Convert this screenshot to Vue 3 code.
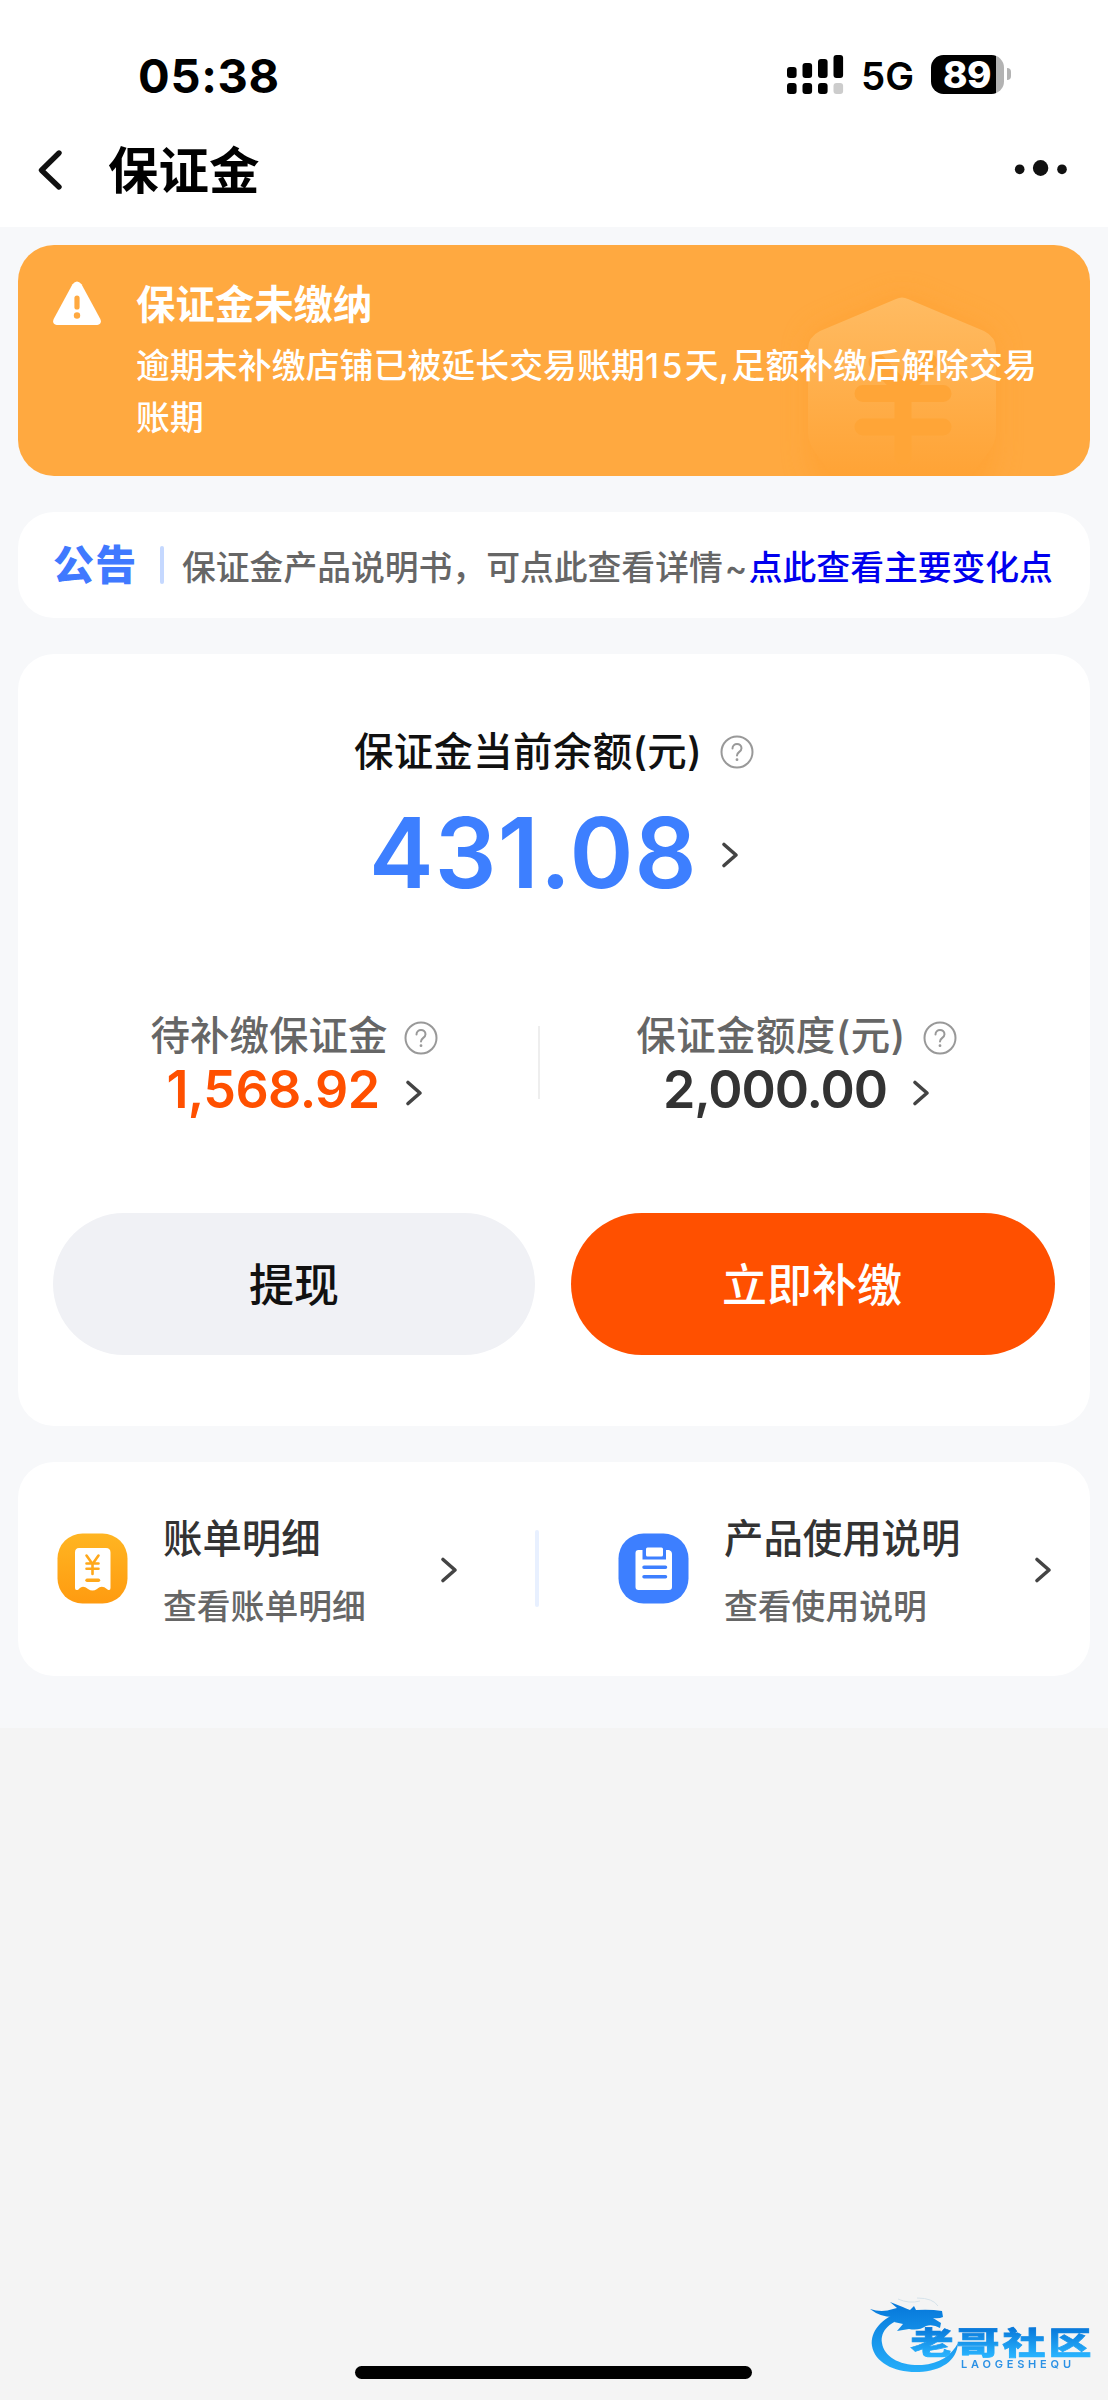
<script setup>
const signalBars = [
  { x: 0, y: 12, h: 11 },
  { x: 15.5, y: 8, h: 15 },
  { x: 31, y: 4, h: 19 },
  { x: 46.5, y: 0, h: 23 },
]
const stats = [
  { key: 'due', label: '待补缴保证金', value: '1,568.92' },
  { key: 'quota', label: '保证金额度(元)', value: '2,000.00' },
]
</script>

<template>
  <div class="page">
    <header class="top">
      <div class="status">
        <span class="time">05:38</span>
        <div class="status-right">
          <svg class="signal" width="57" height="40" viewBox="0 0 57 40">
            <rect v-for="b in signalBars" :key="b.x" :x="b.x" :y="b.y" width="9.6" :height="b.h" rx="3" />
            <rect v-for="b in signalBars" :key="'s' + b.x" :x="b.x" y="28" width="9.6" height="11" rx="3" :fill="b.y === 0 ? '#ccc' : '#000'" />
          </svg>
          <span class="net">5G</span>
          <div class="battery"><span class="level">89</span></div>
          <i class="nub"></i>
        </div>
      </div>
      <nav class="nav">
        <svg class="back" width="28" height="44" viewBox="0 0 28 44" fill="none" stroke="#111" stroke-width="5.4" stroke-linecap="round" stroke-linejoin="round">
          <path d="M23 5 5.500 22.200 23 39" />
        </svg>
        <h1 class="nav-title">保证金</h1>
        <svg class="more" width="54" height="18" viewBox="0 0 54 18" fill="#111">
          <ellipse cx="5.700" cy="10.300" rx="4.800" ry="4.900" /><ellipse cx="26.600" cy="9" rx="7.700" ry="7.900" /><ellipse cx="48" cy="10.300" rx="4.800" ry="4.900" />
        </svg>
      </nav>
    </header>

    <main class="content">
      <section class="banner">
        <svg class="shield" width="280" height="231" viewBox="0 0 280 231">
          <defs>
            <linearGradient id="shieldFill" x1="0" y1="52" x2="0" y2="231" gradientUnits="userSpaceOnUse">
              <stop offset="0" stop-color="#ffbb62" /><stop offset="1" stop-color="#ffa335" />
            </linearGradient>
            <filter id="halo" x="-30%" y="-30%" width="160%" height="160%"><feGaussianBlur stdDeviation="13" /></filter>
          </defs>
          <path d="M130 52q7-4 14 0l76 32q11 6 11 20v96q0 60-94 110-94-50-94-110v-96q0-14 11-20z" fill="#ff9d2a" opacity=".5" filter="url(#halo)" />
          <path d="M131 53q6-3 12 0l76 32q12 6 12 18v82c0 14-5 18-26 46H68c-20-28-25-32-25-46v-82q0-12 12-18z" fill="url(#shieldFill)" />
          <g fill="none" stroke="#ffa537" stroke-width="17" stroke-linecap="round">
            <path d="M98 147.500h80M98 181h80M138 150v60M112 116l26 28 26-28" />
          </g>
        </svg>
        <svg class="warn" width="50" height="46" viewBox="0 0 50 46">
          <path d="M20.500 3.200q4.500-5.400 9 0L48.300 38q2 5-3 6H4.700q-5-1-3-6z" fill="#fff" />
          <path d="M25 17v9" stroke="#ffa940" stroke-width="5.200" stroke-linecap="round" /><circle cx="25" cy="34.500" r="3.200" fill="#ffa940" />
        </svg>
        <div class="banner-text">
          <h2>保证金未缴纳</h2>
          <p>逾期未补缴店铺已被延长交易账期<span class="wide">15</span>天<span class="wide">,</span>足额补缴后解除交易账期</p>
        </div>
      </section>

      <section class="notice">
        <strong class="notice-tag">公告</strong>
        <i class="notice-line"></i>
        <p>保证金产品说明书，可点此查看详情<span class="tilde">~</span><a>点此查看主要变化点</a></p>
      </section>

      <section class="account">
        <div class="balance-label">
          <span>保证金当前余额(元)</span>
          <svg class="help" width="34" height="34" viewBox="0 0 34 34"><circle cx="17" cy="17" r="15.500" /><path d="M12.500 13.500c0-6 9-6 9-.2 0 3.700-4.500 3.500-4.500 7.200" /><circle class="pt" cx="17" cy="24.700" r="1.400" /></svg>
        </div>
        <div class="balance">
          <span>431.08</span>
          <svg class="arrow" width="18" height="28" viewBox="0 0 18 28"><path d="M3 3.500 15 14 3 24.500" /></svg>
        </div>
        <div class="stats">
          <div v-for="s in stats" :key="s.key" class="stat" :class="s.key">
            <div class="stat-label">
              <span>{{ s.label }}</span>
              <svg class="help" width="34" height="34" viewBox="0 0 34 34"><circle cx="17" cy="17" r="15.500" /><path d="M12.500 13.500c0-6 9-6 9-.2 0 3.700-4.500 3.500-4.500 7.200" /><circle class="pt" cx="17" cy="24.700" r="1.400" /></svg>
            </div>
            <div class="stat-value">
              <span>{{ s.value }}</span>
              <svg class="arrow" width="18" height="28" viewBox="0 0 18 28"><path d="M3 3.500 15 14 3 24.500" /></svg>
            </div>
          </div>
        </div>
        <div class="actions">
          <button class="btn plain">提现</button>
          <button class="btn primary">立即补缴</button>
        </div>
      </section>

      <section class="links">
        <div class="link bill">
          <svg width="71" height="71" viewBox="0 0 71 71">
            <defs><linearGradient id="amber" x1="0" y1="0" x2="0" y2="1"><stop offset="0" stop-color="#ffb522" /><stop offset="1" stop-color="#ff9b10" /></linearGradient></defs>
            <rect x=".5" y=".5" width="70" height="70" rx="25" fill="url(#amber)" />
            <path d="M22 15h27q4.500 0 4.500 4.500V55q0 3-3 1.500c-5-4-7-3-10.500-.5q-4.500 3-9 0c-4-3-6.500-3-9.500.5q-3.500 1.500-3.500-1.500V19.500Q18 15 22 15z" fill="#fff" />
            <path d="M29.500 22.500 35.500 31l6-8.500M29.500 30.500h12M29.500 35.800h12M35.500 30v11" fill="none" stroke="#ffa81a" stroke-width="2.600" stroke-linecap="round" stroke-linejoin="round" />
            <path d="M30 47.300h11.500" stroke="#ffa81a" stroke-width="3.400" stroke-linecap="round" />
          </svg>
          <div class="link-text"><h3>账单明细</h3><p>查看账单明细</p></div>
          <svg class="arrow" width="18" height="28" viewBox="0 0 18 28"><path d="M3 3.500 15 14 3 24.500" /></svg>
        </div>
        <i class="links-line"></i>
        <div class="link guide">
          <svg width="71" height="71" viewBox="0 0 71 71">
            <rect x=".5" y=".5" width="70" height="70" rx="25" fill="#3d7fff" />
            <path d="M20.500 17H24.500V26.500H48V17H51q3 1 3 4V54q0 3-3 3H20.500q-3 0-3-3V20q0-3 3-3z" fill="#fff" />
            <rect x="28" y="14.500" width="17" height="9" rx="1.500" fill="#fff" />
            <path d="M26 34.300h21.500M26 43.700h21.500" stroke="#3d7fff" stroke-width="3.500" stroke-linecap="round" />
          </svg>
          <div class="link-text"><h3>产品使用说明</h3><p>查看使用说明</p></div>
          <svg class="arrow" width="18" height="28" viewBox="0 0 18 28"><path d="M3 3.500 15 14 3 24.500" /></svg>
        </div>
      </section>
    </main>

    <i class="home-bar"></i>
    <svg class="mark" width="236" height="82" viewBox="0 0 236 82">
      <defs>
        <linearGradient id="ring" x1="0" y1="10" x2="0" y2="76" gradientUnits="userSpaceOnUse"><stop offset="0" stop-color="#087bdc" /><stop offset="1" stop-color="#27b0fb" /></linearGradient>
        <linearGradient id="word" x1="0" y1="-36" x2="0" y2="3" gradientUnits="userSpaceOnUse"><stop offset="0" stop-color="#0877d9" /><stop offset="1" stop-color="#28b2fd" /></linearGradient>
      </defs>
      <g fill="url(#ring)">
        <path d="M28 14C10 20-2 33 0 48c3 17 23 27 47 26 22-1 38-11 39-29-6 12-19 21-36 22-22 1-38-8-40-22C8 33 18 22 38 19z" />
        <path d="M-2 11q12 4 23 0l4-1-7-6q13 5 20 8l4-4 2 4q14-1 26 1l1 6q-4 2-10 1l8 5-1 5q-7-4-14-2-7 5-17 3l-12 2 6-7-9-2 8-6q-18 4-32-7z" />
      </g>
      <path d="M26 1q11 5 22 2m-3-3q16 0 21 8" fill="none" stroke="#d5e2ea" stroke-width="1" />
      <text class="mark-word" x="0" y="0" transform="translate(38.500 55.500) scale(1 .72)" textLength="181" fill="url(#word)" stroke="url(#word)">老哥社区</text>
      <text class="mark-sub" x="89" y="69.500" textLength="110" fill="#2b91e5">LAOGESHEQU</text>
    </svg>
  </div>
</template>

<style>
body { background: #f4f4f4; }
</style>

<style scoped>
.page {
  position: relative;
  width: 1108px;
  height: 2400px;
  background: #f4f4f4;
  font-family: Inter, "Noto Sans CJK SC", sans-serif;
  overflow: hidden;
}
.page * { box-sizing: border-box; }
h1, h2, h3, p { margin: 0; }
svg { display: block; flex: none; }
.top { height: 227px; background: #fff; }
.status { display: flex; justify-content: space-between; height: 113px; padding: 55px 97px 0 138px; }
.time { font-size: 47px; font-weight: 700; line-height: 42px; letter-spacing: .7px; }
.status-right { display: flex; height: 40px; }
.net { width: 52px; margin-left: 17px; font-size: 38.500px; font-weight: 600; line-height: 43px; }
.battery { width: 73px; height: 39px; margin-left: 18px; border-radius: 12.500px; background: linear-gradient(90deg, #000 65.500px, #b3b3b3 65.500px); }
.level { display: block; padding-left: 12px; color: #fff; font-size: 37px; font-weight: 800; line-height: 39px; letter-spacing: -.5px; }
.nub { width: 4px; height: 12px; margin: 13px 0 0 3px; border-radius: 0 4px 4px 0; background: #b3b3b3; }
.nav { display: flex; align-items: center; height: 114px; padding: 0 40px 0 36px; }
.nav-title { margin: 2px 0 0 44px; font-size: 50.500px; font-weight: 700; line-height: 60px; }
.more { margin: -4px 0 0 auto; }

.content { display: flex; flex-direction: column; gap: 36px; height: 1501px; padding: 18px 18px 0; background: #f7f8fa; }
.banner { position: relative; display: flex; height: 231px; padding: 36px 36px 0 34px; border-radius: 36px; background: #ffa940; color: #fff; overflow: hidden; }
.shield { position: absolute; right: 45px; top: 1px; }
.warn { position: relative; }
.banner-text { position: relative; width: 918px; margin-left: 34px; }
.banner h2 { font-size: 39.400px; font-weight: 700; line-height: 49px; }
.banner p { margin-top: 10px; font-size: 33.800px; font-weight: 500; line-height: 51.500px; letter-spacing: .13px; white-space: normal; }
.wide { letter-spacing: 2.500px; }

.notice { display: flex; align-items: center; height: 106px; padding-left: 35px; border-radius: 36px; background: #fff; white-space: nowrap; }
.notice-tag { width: 82px; color: #4079ff; font-size: 41px; font-weight: 900; line-height: 50px; letter-spacing: 1.200px; }
.notice-line { width: 4px; height: 38px; margin-left: 25px; border-radius: 2px; background: #c5d8ff; }
.notice p { margin: 5px 0 0 18px; color: #666; font-size: 33.800px; font-weight: 500; line-height: 48px; }
.tilde { display: inline-block; width: 26px; padding-left: 2px; }
.notice a { color: #00e; }

.account { height: 772px; padding: 71px 35px 0; border-radius: 36px; background: #fff; }
.help { fill: none; stroke: #999; stroke-width: 2; stroke-linecap: round; }
.help .pt { fill: #999; stroke: none; }
.arrow { fill: none; stroke: #444; stroke-width: 3.600; stroke-linecap: round; stroke-linejoin: round; }
.balance-label { display: flex; align-items: center; justify-content: center; height: 54px; color: #111; font-size: 39.400px; font-weight: 500; line-height: 54px; letter-spacing: .4px; }
.balance-label .help { margin-left: 18px; }
.balance { display: flex; align-items: center; justify-content: center; height: 100px; margin-top: 24px; color: #3d7fff; font-size: 97px; font-weight: 600; line-height: 100px; letter-spacing: 1.200px; }
.balance .arrow { margin: 3px 0 0 23px; }
.stats { display: flex; height: 120px; margin-top: 106px; }
.stat { width: 50%; }
.stat:first-child { background: linear-gradient(#eee, #eee) no-repeat 485px 17px / 2px 73px; }
.stat-label { display: flex; align-items: center; justify-content: center; height: 54px; color: #666; font-size: 39.400px; font-weight: 500; line-height: 54px; letter-spacing: .1px; }
.stat-label .help { margin: 3px 0 0 17px; }
.stat-value { display: flex; align-items: center; justify-content: center; height: 54px; color: #333; font-size: 52px; font-weight: 600; line-height: 54px; letter-spacing: -.6px; }
.due .stat-value { color: #ff5000; }
.stat-value .arrow { margin: 6px 0 0 25px; }
.due { padding-right: 18px; }
.quota { padding-right: 16px; }
.quota .stat-label { letter-spacing: .5px; }
.quota .stat-value { letter-spacing: -1.100px; }
.actions { display: flex; gap: 36px; margin-top: 84px; }
.btn { flex: 1; height: 142px; padding: 4px 0 0; border: 0; border-radius: 71px; font: 500 45px/138px Inter, "Noto Sans CJK SC", sans-serif; }
.plain { background: #f0f1f5; color: #111; }
.primary { padding-right: 2px; background: #ff5000; color: #fff; }

.links { display: flex; height: 214px; border-radius: 36px; background: #fff; }
.link { display: flex; align-items: center; height: 213px; }
.bill { width: 517px; padding: 0 77px 0 39px; }
.guide { flex: 1; padding: 0 38px 0 79px; }
.links-line { width: 4px; height: 77px; margin-top: 68px; border-radius: 2px; background: #e8f0ff; }
.link-text { margin: 7px 0 0 35px; }
.link-text h3 { color: #333; font-size: 39.400px; font-weight: 500; line-height: 56px; }
.link-text p { margin-top: 14px; color: #666; font-size: 33.800px; font-weight: 500; line-height: 52px; }
.link .arrow { margin: 3px 0 0 auto; }

.home-bar { position: absolute; left: 355px; top: 2366px; width: 397px; height: 13px; border-radius: 7px; background: #000; }
.mark { position: absolute; left: 872px; top: 2298px; overflow: visible; filter: blur(.6px); }
.mark-word { font: 900 43px "Noto Sans CJK SC", sans-serif; stroke-width: 1; }
.mark-sub { font: 600 11px Inter, sans-serif; }
</style>
